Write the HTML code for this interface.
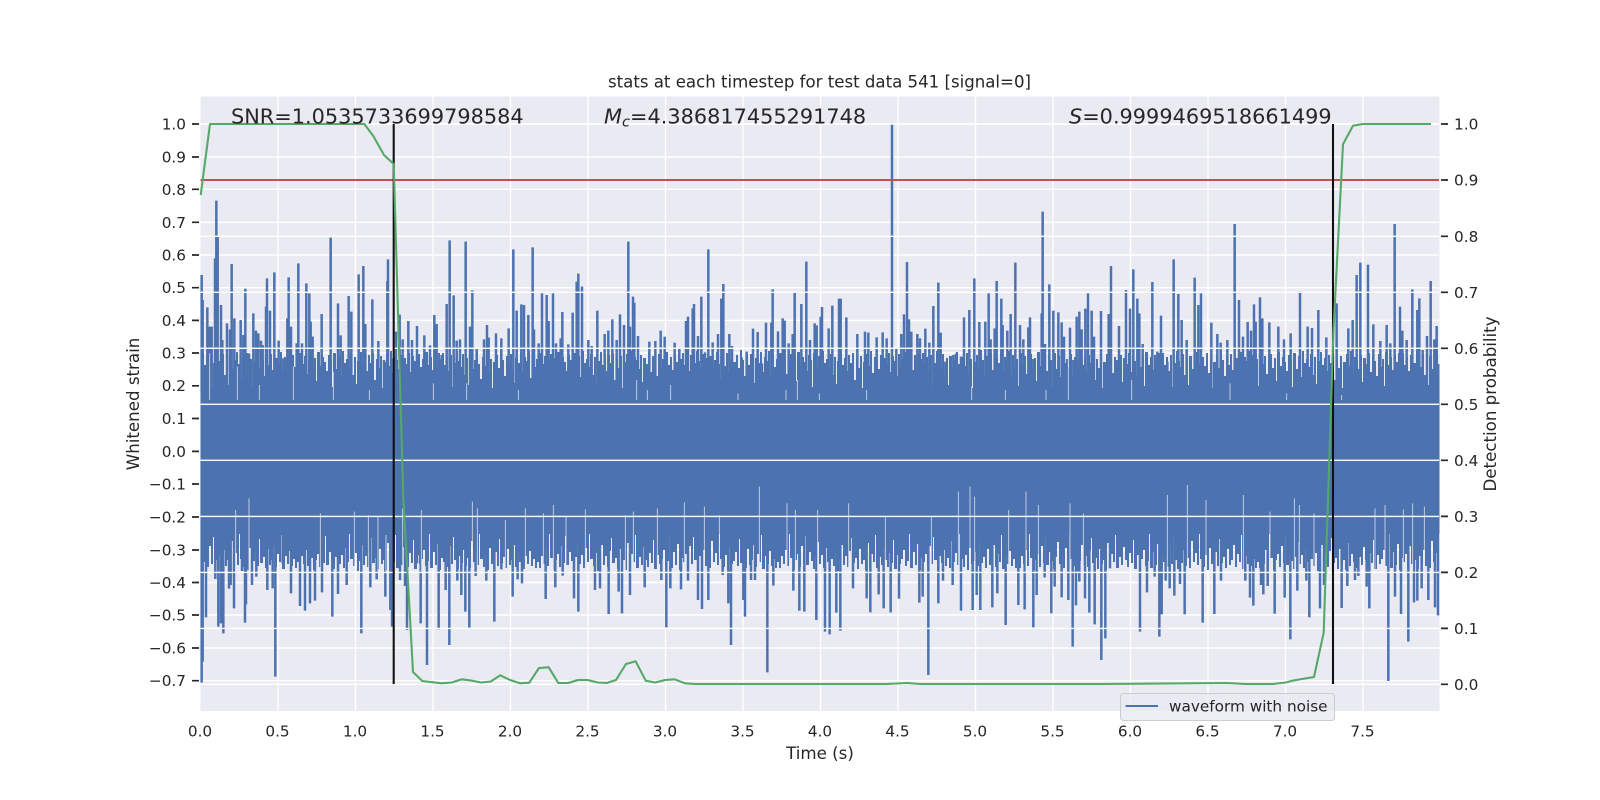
<!DOCTYPE html>
<html><head><meta charset="utf-8"><title>stats</title>
<style>html,body{margin:0;padding:0;background:#fff}svg{display:block}text{font-family:"DejaVu Sans","Liberation Sans",sans-serif;fill:#262626}</style>
</head><body>
<svg width="1600" height="800" viewBox="0 0 1600 800" xmlns="http://www.w3.org/2000/svg">
<defs>
<pattern id="a" patternUnits="userSpaceOnUse" x="200" y="350" width="240" height="50" patternTransform="translate(0,-9)">
<path fill="#4c72b0" d="M0 50V18h2V12h2V24h2V16h2V30h2V14h2V46h1V22h3V10h2V20h2V26h2V13h2V34h2V17h2V44h1V15h3V28h2V19h2V11h2V23h2V38h2V16h2V25h2V12h2V32h2V18h2V47h1V21h3V14h2V27h2V9h2V19h2V35h2V15h2V24h2V13h2V29h2V42h1V17h3V22h2V11h2V31h2V16h2V20h2V10h2V37h2V14h2V26h2V18h2V45h1V12h3V23h2V15h2V33h2V20h2V13h2V27h2V17h2V40h1V11h3V25h2V16h2V21h2V30h2V14h2V19h2V46h1V12h3V28h2V15h2V36h2V10h2V22h2V18h2V26h2V13h2V34h2V16h2V43h1V20h3V11h2V24h2V17h2V30h2V14h2V22h2V12h2V39h2V18h2V27h2V15h2V47h1V21h3V13h2V25h2V10h2V32h2V16h2V19h2V28h2V14h2V41h1V17h3V23h2V12h2V31h2V15h2V20h2V35h2V13h2V26h2V18h2V45h1V11h3V24h2V16h2V29h2V14h2V21h2V12h2V37h2V19h2V50z"/>
</pattern>
<pattern id="b" patternUnits="userSpaceOnUse" x="200" y="350" width="240" height="50" patternTransform="matrix(1 0 0 -1 97 930)">
<path fill="#4c72b0" d="M0 50V18h2V12h2V24h2V16h2V30h2V14h2V46h1V22h3V10h2V20h2V26h2V13h2V34h2V17h2V44h1V15h3V28h2V19h2V11h2V23h2V38h2V16h2V25h2V12h2V32h2V18h2V47h1V21h3V14h2V27h2V9h2V19h2V35h2V15h2V24h2V13h2V29h2V42h1V17h3V22h2V11h2V31h2V16h2V20h2V10h2V37h2V14h2V26h2V18h2V45h1V12h3V23h2V15h2V33h2V20h2V13h2V27h2V17h2V40h1V11h3V25h2V16h2V21h2V30h2V14h2V19h2V46h1V12h3V28h2V15h2V36h2V10h2V22h2V18h2V26h2V13h2V34h2V16h2V43h1V20h3V11h2V24h2V17h2V30h2V14h2V22h2V12h2V39h2V18h2V27h2V15h2V47h1V21h3V13h2V25h2V10h2V32h2V16h2V19h2V28h2V14h2V41h1V17h3V23h2V12h2V31h2V15h2V20h2V35h2V13h2V26h2V18h2V45h1V11h3V24h2V16h2V29h2V14h2V21h2V12h2V37h2V19h2V50z"/>
</pattern>
</defs>
<rect width="1600" height="800" fill="#fff"/>
<rect x="200.5" y="96.5" width="1239" height="614.5" fill="#eaeaf2"/>
<!-- ax1 grid -->
<path stroke="#fff" stroke-width="1.4" fill="none" d="M200.5 124H1439M200.5 157H1439M200.5 189.3H1439M200.5 222.3H1439M200.5 255H1439M200.5 287.7H1439M200.5 320.4H1439M200.5 353H1439M200.5 550H1439M200.5 582.5H1439M200.5 615H1439M200.5 648H1439M200.5 680.7H1439M278 96.5V711M355.5 96.5V711M433 96.5V711M510.5 96.5V711M588 96.5V711M665.5 96.5V711M743 96.5V711M820.5 96.5V711M898 96.5V711M975.5 96.5V711M1053 96.5V711M1130.5 96.5V711M1208 96.5V711M1285.5 96.5V711M1363 96.5V711"/>
<!-- waveform -->
<rect x="200.5" y="341" width="1239" height="50" fill="url(#a)"/>
<rect x="200.5" y="388" width="1239" height="146" fill="#4c72b0"/>
<rect x="200.5" y="530" width="1239" height="50" fill="url(#b)"/>
<g stroke="#4c72b0" stroke-width="7.5" fill="none">
<g transform="translate(180,60) scale(.33333)">
<path d="M65 645V1000M68 720V1000M82 742V1000M88 800V1000M95 800V1000M105 595V1000M109 422V1000M113 530V1000M123 735V1000M127 840V1000M141 790V1000M150 808V1000M155 612V1000M163 775V1000M182 780V1000M190 825V1000M196 686V1000M207 880V1000M220 760V1000M228 812V1000M235 820V1000M243 842V1000M248 855V1000M258 740V1000M261 655V1000M270 752V1000M283 637V1000M296 842V1000M310 895V1000M322 775V1000M326 652V1000M333 800V1000M350 850V1000M355 610V1000M366 850V1000M379 670V1000M388 700V1000M392 785V1000M398 830V1000M415 895V1000M425 762V1000M452 533V1000M474 730V1000M482 826V1000M506 708V1000M514 755V1000M536 643V1000M550 618V1000M556 792V1000M577 718V1000M595 843V1000M612 900V1000M622 663V1000M624 598V1000M634 895V1000M648 815V1000M659 764V1000M668 838V1000M685 783V1000M696 840V1000M711 798V1000M733 826V1000M750 856V1000M763 765V1000M770 792V1000M785 885V1000M809 541V1000M800 732V1000M821 706V1000M830 842V1000M840 838V1000M857 545V1000M870 800V1000M877 691V1000M890 865V1000M912 838V1000M921 795V1000M926 833V1000M948 820V1000M964 835V1000M986 805V1000M1000 568V1000M1010 752V1000M1024 733V1000M1032 735V1000M1045 765V1000M1058 562V1000M1062 808V1000M1076 850V1000M1086 700V1000M1100 705V1000M1106 783V1000M1119 700V1000M1128 850V1000M1147 756V1000M1142 835V1000M1165 853V1000M1178 758V1000M1190 665V1000M1195 641V1000M1206 680V1000M1225 840V1000M1235 858V1000M1252 752V1000"/>
</g>
<g transform="translate(600,60) scale(.33333)">
<path d="M14 822V1000M25 812V1000M37 778V1000M50 840V1000M60 763V1000M72 795V1000M85 545V1000M90 800V1000M99 710V1000M103 728V1000M114 828V1000M134 902V1000M148 845V1000M166 843V1000M182 812V1000M194 830V1000M224 848V1000M238 863V1000M258 783V1000M264 770V1000M278 745V1000M282 732V1000M294 828V1000M304 710V1000M315 877V1000M325 568V1000M338 847V1000M354 822V1000M364 716V1000M370 672V1000M388 822V1000M396 858V1000M425 892V1000M440 875V1000M459 806V1000M473 816V1000M486 910V1000M498 788V1000M514 788V1000M518 688V1000M534 814V1000M548 775V1000M554 782V1000M566 850V1000M578 822V1000M584 696V1000M604 732V1000M619 605V1000M630 840V1000M644 790V1000M650 796V1000M662 770V1000M666 741V1000M686 805V1000M697 737V1000M717 716V1000M722 716V1000M739 772V1000M772 822V1000M795 815V1000M805 818V1000M830 832V1000M848 817V1000M860 835V1000M876 190V1000M889 865V1000M904 822V1000M912 763V1000M921 606V1000M927 778V1000M934 815V1000M952 822V1000M960 835V1000M976 806V1000M988 848V1000M1000 738V1000M1015 668V1000M1022 818V1000M1036 905V1000M1060 885V1000M1068 880V1000M1083 890V1000M1092 772V1000M1108 750V1000M1123 655V1000M1138 786V1000M1156 785V1000M1166 700V1000M1172 838V1000M1184 805V1000M1190 663V1000M1204 716V1000M1208 795V1000M1222 812V1000M1232 762V1000M1246 608V1000"/>
</g>
<g transform="translate(1020,60) scale(.33333)">
<path d="M0 795V1000M10 838V1000M25 802V1000M30 772V1000M40 897V1000M55 878V1000M65 760V1000M68 455V1000M75 852V1000M88 673V1000M100 752V1000M115 757V1000M125 787V1000M132 830V1000M150 803V1000M160 900V1000M170 770V1000M178 755V1000M185 808V1000M196 746V1000M204 700V1000M215 752V1000M222 830V1000M243 753V1000M266 762V1000M273 618V1000M297 798V1000M318 690V1000M330 746V1000M340 628V1000M352 716V1000M358 760V1000M368 852V1000M397 666V1000M412 875V1000M423 767V1000M442 905V1000M461 598V1000M475 702V1000M485 780V1000M500 840V1000M524 653V1000M535 735V1000M543 700V1000M574 788V1000M592 822V1000M602 848V1000M622 840V1000M644 492V1000M657 720V1000M669 830V1000M683 786V1000M693 812V1000M702 733V1000M707 785V1000M720 712V1000M727 775V1000M748 787V1000M775 800V1000M792 838V1000M812 820V1000M840 695V1000M863 800V1000M876 804V1000M895 750V1000M919 832V1000M950 730V1000M985 805V1000M998 780V1000M1010 645V1000M1021 608V1000M1044 614V1000M1060 793V1000M1081 843V1000M1100 795V1000M1111 850V1000M1124 492V1000M1140 740V1000M1147 812V1000M1160 840V1000M1177 688V1000M1192 750V1000M1198 715V1000M1208 870V1000M1221 828V1000M1232 663V1000M1243 838V1000M1250 798V1000"/>
</g>
<g transform="translate(180,460) scale(.33333)">
<path d="M65 668V0M68 605V0M78 472V0M106 357V0M115 500V0M123 490V0M130 520V0M140 300V0M147 386V0M152 375V0M162 445V0M186 333V0M195 488V0M198 433V0M216 375V0M229 350V0M262 390V0M278 385V0M286 650V0M308 310V0M333 400V0M360 438V0M375 452V0M390 430V0M405 422V0M426 397V0M457 470V0M474 402V0M500 375V0M544 520V0M571 382V0M590 358V0M616 410V0M631 450V0M636 500V0M660 360V0M675 378V0M681 510V0M711 310V0M722 490V0M741 615V0M776 508V0M797 390V0M808 555V0M832 362V0M844 405V0M856 455V0M868 503V0M887 348V0M919 362V0M943 485V0M964 328V0M998 410V0M1013 358V0M1026 370V0M1097 417V0M1126 382V0M1148 347V0M1182 415V0M1195 455V0M1213 320V0M1245 390V0"/>
</g>
<g transform="translate(600,460) scale(.33333)">
<path d="M0 385V0M26 462V0M56 395V0M66 460V0M90 405V0M134 382V0M184 360V0M199 502V0M211 385V0M243 388V0M264 362V0M294 420V0M306 447V0M325 420V0M368 345V0M385 430V0M393 555V0M430 420V0M435 470V0M453 360V0M465 360V0M502 637V0M520 377V0M580 392V0M598 452V0M613 455V0M649 480V0M675 515V0M689 523V0M709 458V0M721 512V0M759 385V0M800 415V0M811 457V0M836 403V0M851 445V0M872 457V0M897 416V0M958 428V0M968 410V0M985 645V0M1015 430V0M1029 362V0M1058 375V0M1083 452V0M1118 450V0M1130 405V0M1141 450V0M1177 442V0M1192 400V0M1217 495V0M1255 435V0"/>
</g>
<g transform="translate(1020,460) scale(.33333)">
<path d="M14 448V0M40 502V0M50 405V0M74 352V0M94 460V0M104 380V0M125 412V0M145 420V0M158 560V0M168 436V0M178 365V0M195 415V0M208 458V0M224 493V0M244 600V0M256 535V0M270 325V0M360 515V0M381 397V0M404 350V0M418 530V0M425 463V0M437 362V0M449 385V0M463 407V0M480 372V0M494 463V0M548 488V0M583 462V0M603 362V0M676 362V0M690 413V0M700 437V0M723 375V0M730 403V0M743 378V0M764 461V0M794 413V0M811 538V0M832 392V0M859 362V0M868 472V0M900 445V0M912 375V0M965 444V0M982 378V0M1005 360V0M1015 348V0M1040 380V0M1048 445V0M1105 663V0M1125 410V0M1143 462V0M1165 545V0M1182 427V0M1192 422V0M1205 385V0M1225 420V0M1245 442V0M1254 466V0"/>
</g>
</g>
<!-- pale needles cut into the envelope -->
<g stroke="#eaeaf2" stroke-width="2.6" stroke-opacity=".85" fill="none">
<g transform="translate(180,460) scale(.33333)"><path d="M167 150V340M207 115V340M421 160V340M523 155V340M565 165V340M594 170V340M618 225V340M668 145V340M724 150V340M877 125V340M892 145V340M976 180V340M1036 145V340M1090 160V340M1120 135V340M1158 170V340M1216 148V340"/></g>
<g transform="translate(600,460) scale(.33333)"><path d="M76 165V340M100 155V340M172 145V340M253 127V340M313 140V340M358 165V340M478 80V340M561 130V340M586 150V340M653 150V340M746 130V340M856 170V340M994 170V340M1075 95V340M1110 80V340M1124 110V340M1226 150V340"/></g>
<g transform="translate(1020,460) scale(.33333)"><path d="M18 95V340M55 135V340M150 130V340M190 160V340M442 105V340M502 75V340M558 120V340M670 105V340M750 155V340M823 115V340M838 135V340M882 160V340M1065 145V340M1095 135V340M1150 148V340M1178 130V340M1213 140V340"/></g>
<g transform="translate(180,60) scale(.33333)"><path d="M89 880V1020M172 920V1020M238 975V1020M340 920V1020M460 935V1020M568 990V1020M760 970V1020M860 970V1020M1015 990V1020"/></g>
<g transform="translate(600,60) scale(.33333)"><path d="M110 960V1020M142 990V1020M212 975V1020M414 1000V1020M558 990V1020M592 960V1020M658 1000V1020M800 990V1020M1115 980V1020M1216 990V1020"/></g>
<g transform="translate(1020,60) scale(.33333)"><path d="M78 990V1020M145 880V1020M335 960V1020M630 970V1020M800 1000V1020M965 1005V1020"/></g>
</g>
<!-- ax2 grid over the waveform -->
<path stroke="#fff" stroke-width="1.4" fill="none" d="M200.5 124H1439M200.5 236.3H1439M200.5 292.3H1439M200.5 348.3H1439M200.5 404.3H1439M200.5 460.3H1439M200.5 516.4H1439M200.5 572.4H1439M200.5 628.4H1439M200.5 684.3H1439"/>
<!-- ax2 lines -->
<path stroke="#c44e52" stroke-width="2.08" fill="none" d="M200.5 180H1439"/>
<path stroke="#111" stroke-width="2.08" fill="none" d="M393.7 124V684M1333 124V684"/>
<path stroke="#55a868" stroke-width="2.08" fill="none" stroke-linejoin="round" d="M200.7 195L210 124L364.3 124L373.3 136L384 155L393.7 164L403.3 497L413 672L422.3 681L441.7 683.3L451.7 682.5L461.7 679.3L471 680.5L481 682.5L490.7 681.5L500.3 675.3L510 680L520 683.3L529.3 682.7L539 668L548.7 667.3L558.3 683L568.3 683L577.7 680L587.7 680L597.7 682.5L606.7 683L616 680L626 664L635.7 661.3L645.7 680.7L655.3 682.5L665 680L674.7 679.3L685 683.3L695 684L886.7 684L906.7 683L920 684L1100 684L1226.7 683L1245 684L1273 684L1285.7 682.5L1293.3 680.5L1314 677L1323.7 632.7L1333.4 332L1343 144.3L1353 125.7L1362.7 124L1431 124"/>
<!-- ticks -->
<path stroke="#262626" stroke-width="1.7" fill="none" d="M192 124h7M192 157h7M192 189.3h7M192 222.3h7M192 255h7M192 287.7h7M192 320.4h7M192 353h7M192 385.8h7M192 418.5h7M192 451.4h7M192 484h7M192 517h7M192 550h7M192 582.5h7M192 615h7M192 648h7M192 680.7h7M1441 124h7M1441 180h7M1441 236.3h7M1441 292.3h7M1441 348.3h7M1441 404.3h7M1441 460.3h7M1441 516.4h7M1441 572.4h7M1441 628.4h7M1441 684.3h7"/>
<!-- left labels -->
<g font-size="15.28" text-anchor="end">
<text x="186" y="129.5">1.0</text><text x="186" y="162.5">0.9</text><text x="186" y="195">0.8</text><text x="186" y="228">0.7</text><text x="186" y="260.5">0.6</text><text x="186" y="293">0.5</text><text x="186" y="326">0.4</text><text x="186" y="358.5">0.3</text><text x="186" y="391">0.2</text><text x="186" y="424">0.1</text><text x="186" y="457">0.0</text><text x="186" y="489.5">−0.1</text><text x="186" y="522.5">−0.2</text><text x="186" y="555.5">−0.3</text><text x="186" y="588">−0.4</text><text x="186" y="620.5">−0.5</text><text x="186" y="653.5">−0.6</text><text x="186" y="686">−0.7</text>
</g>
<!-- right labels -->
<g font-size="15.28">
<text x="1454" y="129.5">1.0</text><text x="1454" y="185.5">0.9</text><text x="1454" y="242">0.8</text><text x="1454" y="298">0.7</text><text x="1454" y="354">0.6</text><text x="1454" y="410">0.5</text><text x="1454" y="466">0.4</text><text x="1454" y="522">0.3</text><text x="1454" y="578">0.2</text><text x="1454" y="634">0.1</text><text x="1454" y="690">0.0</text>
</g>
<!-- x labels -->
<g font-size="15.28" text-anchor="middle">
<text x="200" y="736.5">0.0</text><text x="277.5" y="736.5">0.5</text><text x="355" y="736.5">1.0</text><text x="432.5" y="736.5">1.5</text><text x="510" y="736.5">2.0</text><text x="587.5" y="736.5">2.5</text><text x="665" y="736.5">3.0</text><text x="742.5" y="736.5">3.5</text><text x="820" y="736.5">4.0</text><text x="897.5" y="736.5">4.5</text><text x="975" y="736.5">5.0</text><text x="1052.5" y="736.5">5.5</text><text x="1130" y="736.5">6.0</text><text x="1207.5" y="736.5">6.5</text><text x="1285" y="736.5">7.0</text><text x="1362.5" y="736.5">7.5</text>
</g>
<text x="820" y="759" font-size="16.67" text-anchor="middle">Time (s)</text>
<text x="819.5" y="87.5" font-size="16.6" text-anchor="middle">stats at each timestep for test data 541 [signal=0]</text>
<text transform="translate(139,404) rotate(-90)" font-size="16.67" text-anchor="middle">Whitened strain</text>
<text transform="translate(1496,404) rotate(-90)" font-size="16.67" text-anchor="middle">Detection probability</text>
<!-- annotations -->
<text x="231" y="123.5" font-size="20.83">SNR=1.0535733699798584</text>
<text x="604" y="123.5" font-size="20.83"><tspan font-style="italic">M</tspan><tspan font-style="italic" font-size="14.6" dy="3">c</tspan><tspan dy="-3">=4.386817455291748</tspan></text>
<text x="1069" y="123.5" font-size="20.83"><tspan font-style="italic">S</tspan>=0.9999469518661499</text>
<!-- legend -->
<rect x="1120.5" y="693.5" width="214" height="27" rx="3" fill="#eaeaf2" fill-opacity=".8" stroke="#cccccc" stroke-width="1"/>
<path stroke="#4c72b0" stroke-width="2.08" d="M1125.5 706H1158"/>
<text x="1169" y="711.5" font-size="15.28">waveform with noise</text>
</svg>
</body></html>
